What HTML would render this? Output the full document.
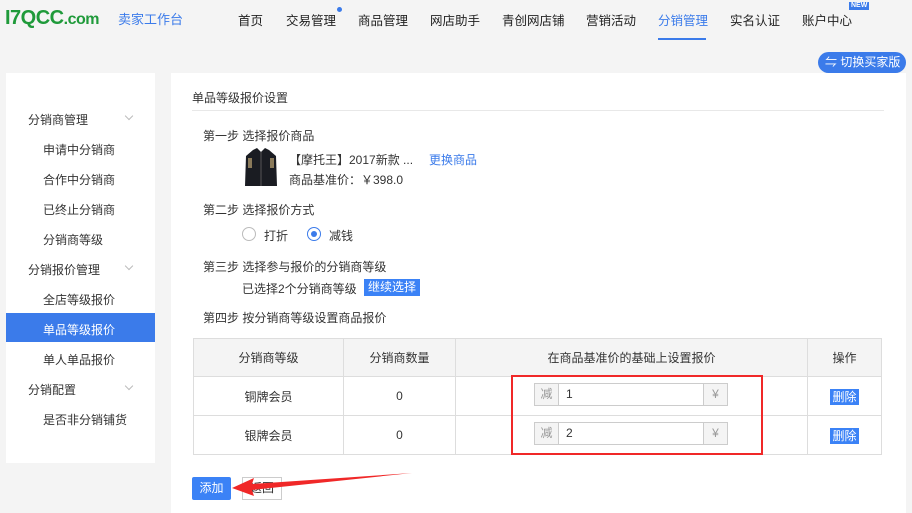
<!DOCTYPE html>
<html><head><meta charset="utf-8"><style>
*{margin:0;padding:0;box-sizing:border-box}
body{width:912px;height:511px;overflow:hidden;background:#f4f4f4;font-family:"Liberation Sans","Noto Sans CJK SC",sans-serif;font-size:12px;color:#333;position:relative}
.a{position:absolute;white-space:nowrap}
.nav{font-size:12.5px;color:#222;top:10px}
.side{left:6px;top:73px;width:149px;height:390px;background:#fff}
.main{left:171px;top:73px;width:735px;height:440px;background:#fff}
.si{position:absolute;font-size:12px;color:#333}
.chev{position:absolute;left:120px;width:6px;height:6px;border-right:1px solid #bbb;border-bottom:1px solid #bbb;transform:rotate(45deg)}
table{border-collapse:collapse;position:absolute;left:193px;top:338px}
td{border:1px solid #ddd;text-align:center;font-size:12px;color:#333}
.inp{position:absolute;height:23px;border:1px solid #ccc;background:#fff}
.btn{background:#3b82f6;color:#fff}
</style></head><body>
<div class="a" style="left:5px;top:7px;font:bold 20px 'Liberation Sans',sans-serif;color:#1f9a3a;letter-spacing:-0.5px">I7QCC<span style="font-size:16px">.com</span></div>
<div class="a" style="left:118px;top:9px;font-size:13px;color:#3b7bea">卖家工作台</div>
<div class="a nav" style="left:238px">首页</div>
<div class="a nav" style="left:286px">交易管理</div>
<div class="a" style="left:337px;top:7px;width:5px;height:5px;border-radius:50%;background:#3b7bea"></div>
<div class="a nav" style="left:358px">商品管理</div>
<div class="a nav" style="left:430px">网店助手</div>
<div class="a nav" style="left:502px">青创网店铺</div>
<div class="a nav" style="left:586px">营销活动</div>
<div class="a nav" style="left:658px;color:#3b7bea">分销管理</div>
<div class="a" style="left:658px;top:38px;width:48px;height:2px;background:#3b7bea"></div>
<div class="a nav" style="left:730px">实名认证</div>
<div class="a nav" style="left:802px">账户中心</div>
<div class="a" style="left:849px;top:2px;background:#3b7bea;color:#fff;font-size:7px;font-weight:bold;padding:0 2px;line-height:8px">NEW</div>
<div class="a" style="left:818px;top:52px;width:88px;height:21px;border-radius:11px;background:#3b7bea;color:#fff;font-size:12px;line-height:21px;padding-left:7px">⇋ 切换买家版</div>

<div class="a side">
<div class="si" style="left:22px;top:38px">分销商管理</div><div class="chev" style="top:40px"></div>
<div class="si" style="left:37px;top:68px">申请中分销商</div>
<div class="si" style="left:37px;top:98px">合作中分销商</div>
<div class="si" style="left:37px;top:128px">已终止分销商</div>
<div class="si" style="left:37px;top:158px">分销商等级</div>
<div class="si" style="left:22px;top:188px">分销报价管理</div><div class="chev" style="top:190px"></div>
<div class="si" style="left:37px;top:218px">全店等级报价</div>
<div class="si" style="left:0;top:240px;width:149px;height:29px;background:#3b7bea"></div>
<div class="si" style="left:37px;top:248px;color:#fff">单品等级报价</div>
<div class="si" style="left:37px;top:278px">单人单品报价</div>
<div class="si" style="left:22px;top:308px">分销配置</div><div class="chev" style="top:310px"></div>
<div class="si" style="left:37px;top:338px">是否非分销铺货</div>
</div>

<div class="a main"></div>
<div class="a" style="left:192px;top:89px">单品等级报价设置</div>
<div class="a" style="left:192px;top:110px;width:692px;height:1px;background:#e8e8e8"></div>
<div class="a" style="left:203px;top:127px">第一步 选择报价商品</div>
<svg class="a" style="left:243px;top:146px" width="36" height="42" viewBox="0 0 36 42"><path d="M10 4 L14 2 L18 6 L22 2 L26 4 L33 10 L34 40 L2 40 L3 10 Z" fill="#1a1c22"/><path d="M18 6 V40" stroke="#555" stroke-width="1"/><rect x="5" y="12" width="4" height="10" fill="#8a7a5a"/><rect x="27" y="12" width="4" height="10" fill="#8a7a5a"/></svg>
<div class="a" style="left:289px;top:151px">【摩托王】2017新款 ...</div>
<div class="a" style="left:429px;top:151px;color:#3b7bea">更换商品</div>
<div class="a" style="left:289px;top:171px">商品基准价：￥398.0</div>
<div class="a" style="left:203px;top:201px">第二步 选择报价方式</div>
<div class="a" style="left:242px;top:227px;width:14px;height:14px;border:1px solid #bbb;border-radius:50%"></div>
<div class="a" style="left:264px;top:227px">打折</div>
<div class="a" style="left:307px;top:227px;width:14px;height:14px;border:1px solid #3b7bea;border-radius:50%"></div>
<div class="a" style="left:311px;top:231px;width:6px;height:6px;background:#3b7bea;border-radius:50%"></div>
<div class="a" style="left:329px;top:227px">减钱</div>
<div class="a" style="left:203px;top:258px">第三步 选择参与报价的分销商等级</div>
<div class="a" style="left:242px;top:280px">已选择2个分销商等级</div>
<div class="a btn" style="left:364px;top:279px;width:56px;height:17px;line-height:17px;text-align:center">继续选择</div>
<div class="a" style="left:203px;top:309px">第四步 按分销商等级设置商品报价</div>
<table>
<tr style="height:38px;background:#f4f4f4"><td style="width:150px">分销商等级</td><td style="width:112px">分销商数量</td><td style="width:352px">在商品基准价的基础上设置报价</td><td style="width:74px">操作</td></tr>
<tr style="height:39px"><td>铜牌会员</td><td>0</td><td></td><td><span class="btn" style="padding:1px 2px">删除</span></td></tr>
<tr style="height:39px"><td>银牌会员</td><td>0</td><td></td><td><span class="btn" style="padding:1px 2px">删除</span></td></tr>
</table>
<div class="inp" style="left:534px;top:383px;width:194px"></div>
<div class="a" style="left:534px;top:383px;width:25px;height:23px;background:#f4f4f4;border:1px solid #ccc;color:#999;text-align:center;line-height:21px">减</div>
<div class="a" style="left:566px;top:387px">1</div>
<div class="a" style="left:703px;top:383px;width:25px;height:23px;background:#f4f4f4;border:1px solid #ccc;color:#999;text-align:center;line-height:21px">¥</div>
<div class="inp" style="left:534px;top:422px;width:194px"></div>
<div class="a" style="left:534px;top:422px;width:25px;height:23px;background:#f4f4f4;border:1px solid #ccc;color:#999;text-align:center;line-height:21px">减</div>
<div class="a" style="left:566px;top:426px">2</div>
<div class="a" style="left:703px;top:422px;width:25px;height:23px;background:#f4f4f4;border:1px solid #ccc;color:#999;text-align:center;line-height:21px">¥</div>
<div class="a" style="left:511px;top:375px;width:252px;height:80px;border:2px solid #f02828"></div>
<div class="a btn" style="left:192px;top:477px;width:39px;height:23px;line-height:23px;text-align:center;border-radius:2px">添加</div>
<div class="a" style="left:242px;top:477px;width:40px;height:23px;border:1px solid #ccc;line-height:21px;text-align:center">返回</div>
<svg class="a" style="left:0;top:0" width="912" height="511"><path d="M412 473 L252 484 L254 478 L232 488 L254 496 L252 490 Z" fill="#f02828"/></svg>
</body></html>
